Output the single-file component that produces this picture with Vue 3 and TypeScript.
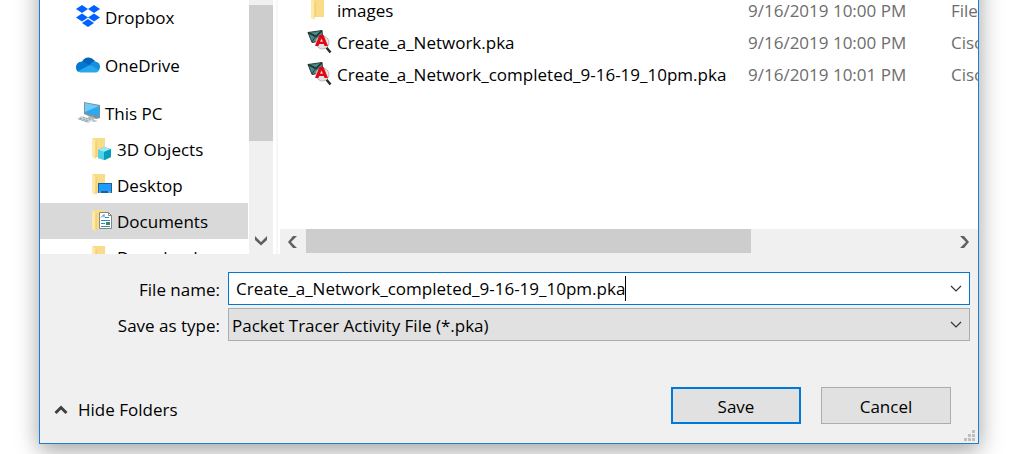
<script setup lang="ts">
import { ref } from 'vue'

type NavIcon = 'dropbox' | 'onedrive' | 'pc' | 'objects' | 'desktop' | 'documents' | 'downloads'

interface NavItem {
  label: string
  icon: NavIcon
  child?: boolean
  spaced?: boolean
}

interface FileRow {
  name: string
  modified: string
  type: string
  folder: boolean
}

const navItems: NavItem[] = [
  { label: 'Dropbox', icon: 'dropbox' },
  { label: 'OneDrive', icon: 'onedrive', spaced: true },
  { label: 'This PC', icon: 'pc', spaced: true },
  { label: '3D Objects', icon: 'objects', child: true },
  { label: 'Desktop', icon: 'desktop', child: true },
  { label: 'Documents', icon: 'documents', child: true },
  { label: 'Downloads', icon: 'downloads', child: true },
]

const files: FileRow[] = [
  { name: 'images', modified: '9/16/2019 10:00 PM', type: 'File folder', folder: true },
  { name: 'Create_a_Network.pka', modified: '9/16/2019 10:00 PM', type: 'Cisco', folder: false },
  { name: 'Create_a_Network_completed_9-16-19_10pm.pka', modified: '9/16/2019 10:01 PM', type: 'Cisco', folder: false },
]

const selected = ref('Documents')
const fileName = ref('Create_a_Network_completed_9-16-19_10pm.pka')
const fileType = ref('pka')
</script>

<template>
  <div class="page">
    <main class="dialog">
      <div class="browser">
        <nav class="tree" aria-label="Folders">
          <ul class="tree-list">
            <li v-for="item in navItems" :key="item.label" :class="{ spaced: item.spaced }">
              <button
                type="button"
                class="tree-item"
                :class="{ child: item.child, active: selected === item.label }"
                @click="selected = item.label"
              >
                <svg class="icon" viewBox="0 0 24 24" aria-hidden="true">
                  <g v-if="item.icon === 'dropbox'" fill="#0061ff">
                    <path d="M6 0l6 4-6 4-6-4zM18 0l6 4-6 4-6-4zM6 8.600l6 4-6 4-6-4zM18 8.600l6 4-6 4-6-4zM12 14l6 4-6 4-6-4z" />
                  </g>
                  <g v-else-if="item.icon === 'onedrive'">
                    <path d="M6 9C8 4 14 2.500 19 8L15 14 5 10z" fill="#0364b8" />
                    <path d="M1 18C-2 12 2 8 7 8.500L16 13 3 19z" fill="#0078d4" />
                    <path d="M14 12c2-4 5-4.500 6.500-3C25 10 25 16 22 18z" fill="#1490df" />
                    <path d="M2 18l12-6 9 5c-1 2-2 2.500-4 2.500H6c-2 0-3-.5-4-1.500z" fill="#28a8ea" />
                  </g>
                  <g v-else-if="item.icon === 'pc'">
                    <path d="M8 1l16 3v13l-4 1L8 13z" fill="#7f929b" />
                    <path d="M9 2l14 3v10L9 12z" fill="#29a9ef" />
                    <path d="M9 2l14 3L9 11z" fill="#71cafa" />
                    <path d="M13 15l5 1v3l4 1-4 1-7-3z" fill="#aebbc2" />
                    <path d="M5 15l13 4-6 3-11-4z" fill="#d1dade" />
                    <path d="M4 17l9 3M7 16l8 3M3 18l9 3" stroke="#8b9ba4" stroke-dasharray="2 1" />
                  </g>
                  <g v-else>
                    <path d="M4 1h12v19H4z" fill="#f9dc8a" />
                    <path d="M3 1l4 3v18l-4-2z" fill="#ffe9a8" />
                    <path d="M7 4v17" stroke="#eac465" />
                    <g v-if="item.icon === 'objects'">
                      <path d="M9 13l6-3 7 2v8l-6 3-7-2z" fill="#22b7d5" />
                      <path d="M9 13l6-3 7 2-7 3z" fill="#9aeaf5" />
                      <path d="M9 13l6 2v8l-6-2z" fill="#52d0e5" />
                      <path d="M15 15l7-3v8l-7 3z" fill="#079ebd" />
                    </g>
                    <g v-if="item.icon === 'desktop'">
                      <path d="M9 10h14v10H9z" fill="#17629d" />
                      <path d="M10 11h12v7H10z" fill="#1b9cff" />
                      <path d="M10 19h2M19 19h3" stroke="#b5ddf4" />
                    </g>
                    <g v-if="item.icon === 'documents'">
                      <path d="M10.500 3.500h9l3 3v13h-12z" fill="#fff" stroke="#858585" />
                      <path d="M19.500 3.500v3h3" fill="none" stroke="#858585" />
                      <path d="M12 8.500l3-3v3M16 8.500h4M12 11.500h9M12 14.500h4M12 17.500h9" fill="none" stroke="#338bbf" />
                      <path d="M17 13h4v3h-4z" fill="#477e71" />
                    </g>
                  </g>
                </svg>
                <span class="tree-label">{{ item.label }}</span>
              </button>
            </li>
          </ul>
          <div class="v-scroll" aria-hidden="true">
            <div class="v-thumb"></div>
            <svg class="v-arrow" viewBox="0 0 12 10"><path d="M0 0l6 6 6-6v4L6 9.500 0 4z" fill="#606060" /></svg>
          </div>
        </nav>

        <section class="files" aria-label="Files">
          <table class="file-table">
            <colgroup>
              <col class="col-name" />
              <col class="col-date" />
              <col class="col-type" />
            </colgroup>
            <tbody>
              <tr v-for="file in files" :key="file.name">
                <td>
                  <div class="name-cell">
                    <svg class="icon" viewBox="0 0 24 24" aria-hidden="true">
                      <g v-if="file.folder">
                        <path d="M5 0h12v18H5z" fill="#f9dc8a" />
                        <path d="M4 0l4 3v18l-4-2z" fill="#ffe9a8" />
                        <path d="M8 3v15" stroke="#eac465" />
                      </g>
                      <g v-else>
                        <path d="M1 1.500l14-2 1 10-11 2z" fill="#4f8583" stroke="#283f40" />
                        <path d="M1 1.500l8 4 6-6" fill="none" stroke="#193334" stroke-width="1.500" />
                        <path d="M5 11l3-5" stroke="#283f40" />
                        <path d="M19 16l4.500 5.500" stroke="#292c2c" stroke-width="2.500" />
                        <circle cx="15.500" cy="11.500" r="6.500" fill="#e2e3e3" stroke="#b9bdbe" />
                        <path d="M12.500 4h4L21 15h-3.500l-.7-2h-4.600l-.7 2H8z" fill="#e20710" />
                        <path d="M14.500 7.500l1.300 3.300h-2.600z" fill="#f4e6e6" />
                      </g>
                    </svg>
                    <span>{{ file.name }}</span>
                  </div>
                </td>
                <td class="muted">{{ file.modified }}</td>
                <td class="muted">{{ file.type }}</td>
              </tr>
            </tbody>
          </table>
          <div class="h-scroll" aria-hidden="true">
            <svg class="h-arrow" viewBox="0 0 10 12"><path d="M9 0L3 6l6 6H5L0 6l5-6z" fill="#606060" /></svg>
            <div class="h-track"><div class="h-thumb"></div></div>
            <svg class="h-arrow" viewBox="0 0 10 12"><path d="M1 0l6 6-6 6h4l5-6-5-6z" fill="#606060" /></svg>
          </div>
        </section>
      </div>

      <form class="form" @submit.prevent>
        <div class="fields">
          <label for="file-name">File name:</label>
          <div class="combo">
            <input id="file-name" v-model="fileName" type="text" spellcheck="false" autocomplete="off" />
            <span class="caret"></span>
            <button type="button" class="drop" aria-label="Previous file names">
              <svg class="chevron" viewBox="0 0 12 7"><path d="M1 1l5 5 5-5" /></svg>
            </button>
          </div>
          <label for="file-type">Save as type:</label>
          <div class="select-box">
            <select id="file-type" v-model="fileType">
              <option value="pka">Packet Tracer Activity File (*.pka)</option>
            </select>
            <svg class="chevron" viewBox="0 0 12 7" aria-hidden="true"><path d="M1 1l5 5 5-5" /></svg>
          </div>
        </div>
        <div class="actions">
          <button type="button" class="hide">
            <svg viewBox="0 0 14 10" aria-hidden="true"><path d="M1.500 8L7 2.500 12.500 8" fill="none" stroke="#404040" stroke-width="3" /></svg>
            <span>Hide Folders</span>
          </button>
          <div class="buttons">
            <button type="submit" class="btn primary">Save</button>
            <button type="button" class="btn">Cancel</button>
          </div>
        </div>
      </form>
      <svg class="grip" viewBox="0 0 11 11" aria-hidden="true">
        <path d="M8 0h3v3H8zM4 4h3v3H4zM8 4h3v3H8zM0 8h3v3H0zM4 8h3v3H4zM8 8h3v3H8z" fill="#bfbfbf" />
      </svg>
    </main>
  </div>
</template>

<style>
body {
  background: #fff;
}
</style>

<style scoped>
.page {
  overflow: hidden;
  padding: 0 45px 10px 39px;
  font-family: "Open Sans", "Noto Sans", sans-serif;
  font-size: 17px;
  line-height: 24px;
  color: #000;
}
.page *,
.page {
  box-sizing: border-box;
}
button,
input,
select {
  font: inherit;
  color: inherit;
}
.dialog {
  position: relative;
  margin-top: -40px;
  padding-top: 39px;
  border: 1px solid #1a7fd4;
  background: #f0f0f0;
  box-shadow: 0 6px 22px rgba(0, 0, 0, 0.38);
}
.browser {
  display: flex;
  height: 254px;
  background: #fff;
}
.tree {
  display: flex;
  flex: 0 0 233px;
  overflow: hidden;
}
.tree-list {
  flex: 1;
  margin: -1px 1px 0 0;
  padding: 0;
  list-style: none;
}
.spaced {
  margin-top: 12px;
}
.tree-item {
  display: flex;
  align-items: center;
  gap: 5px;
  width: 100%;
  height: 36px;
  padding: 0 0 0 36px;
  border: 0;
  background: transparent;
  white-space: nowrap;
}
.tree-item.child {
  gap: 4px;
  padding-left: 49px;
}
.tree-item.active {
  background: #d9d9d9;
}
.tree-label {
  padding-top: 2px;
}
.icon {
  flex: none;
  width: 24px;
  height: 24px;
  overflow: visible;
}
.v-scroll {
  display: flex;
  flex-direction: column;
  align-items: center;
  justify-content: space-between;
  width: 24px;
  padding: 5px 0 8px;
  background: #f0f0f0;
}
.v-thumb {
  width: 100%;
  height: 136px;
  background: #cdcdcd;
}
.v-arrow {
  width: 12px;
  height: 10px;
}
.files {
  display: flex;
  flex: 1;
  flex-direction: column;
  justify-content: space-between;
  min-width: 0;
  margin-left: 3px;
  padding-left: 2px;
  border-left: 2px solid #f7f7f7;
  overflow: hidden;
}
.file-table {
  width: 100%;
  margin-top: -5px;
  table-layout: fixed;
  border-collapse: collapse;
}
.col-date {
  width: 203px;
}
.col-type {
  width: 27px;
}
.file-table td {
  height: 32px;
  padding: 0;
  overflow: hidden;
  white-space: nowrap;
}
.name-cell {
  display: flex;
  align-items: center;
  gap: 6px;
  padding-left: 27px;
}
.muted {
  color: #6d6d6d;
}
.h-scroll {
  display: flex;
  align-items: center;
  gap: 8px;
  height: 25px;
  padding: 0 9px 0 8px;
  background: #f0f0f0;
}
.h-arrow {
  flex: none;
  width: 10px;
  height: 12px;
}
.h-track {
  flex: 1;
  height: 100%;
}
.h-thumb {
  width: 69%;
  height: 24px;
  background: #cdcdcd;
}
.form {
  padding: 18px 8px 19px 14px;
}
.fields {
  display: grid;
  grid-template-columns: 166px 1fr;
  align-items: center;
  gap: 3px 8px;
}
.fields label {
  padding-top: 2px;
  text-align: right;
}
.combo {
  display: flex;
  align-items: center;
  height: 33px;
  padding-left: 7px;
  border: 1px solid #0078d7;
  background: #fff;
}
.combo input {
  field-sizing: content;
  min-width: 0;
  padding: 0;
  border: 0;
  outline: 0;
  background: transparent;
  caret-color: transparent;
}
.caret {
  flex: none;
  width: 1px;
  height: 25px;
  background: #000;
}
.drop {
  display: flex;
  align-items: center;
  justify-content: center;
  width: 26px;
  height: 100%;
  margin-left: auto;
  padding: 0;
  border: 0;
  background: transparent;
}
.chevron {
  width: 12px;
  height: 7px;
  fill: none;
  stroke: #333;
  stroke-width: 1.2;
}
.select-box {
  display: grid;
  align-items: center;
}
.select-box > * {
  grid-area: 1 / 1;
}
.select-box select {
  width: 100%;
  height: 33px;
  padding: 2px 30px 0 3px;
  border: 1px solid #adadad;
  border-radius: 0;
  appearance: none;
  background: #e1e1e1;
}
.select-box .chevron {
  justify-self: end;
  margin-right: 8px;
  pointer-events: none;
}
.actions {
  display: flex;
  align-items: center;
  justify-content: space-between;
  margin-top: 46px;
  padding-right: 19px;
}
.hide {
  display: flex;
  align-items: center;
  gap: 10px;
  padding: 8px 0 0;
  border: 0;
  background: transparent;
}
.hide svg {
  width: 14px;
  height: 10px;
}
.buttons {
  display: flex;
  gap: 20px;
}
.btn {
  width: 130px;
  height: 37px;
  padding: 2px 0 0;
  border: 1px solid #adadad;
  background: #e1e1e1;
}
.btn.primary {
  border: 2px solid #0078d7;
}
.grip {
  position: absolute;
  right: 3px;
  bottom: 2px;
  width: 11px;
  height: 11px;
}
</style>
